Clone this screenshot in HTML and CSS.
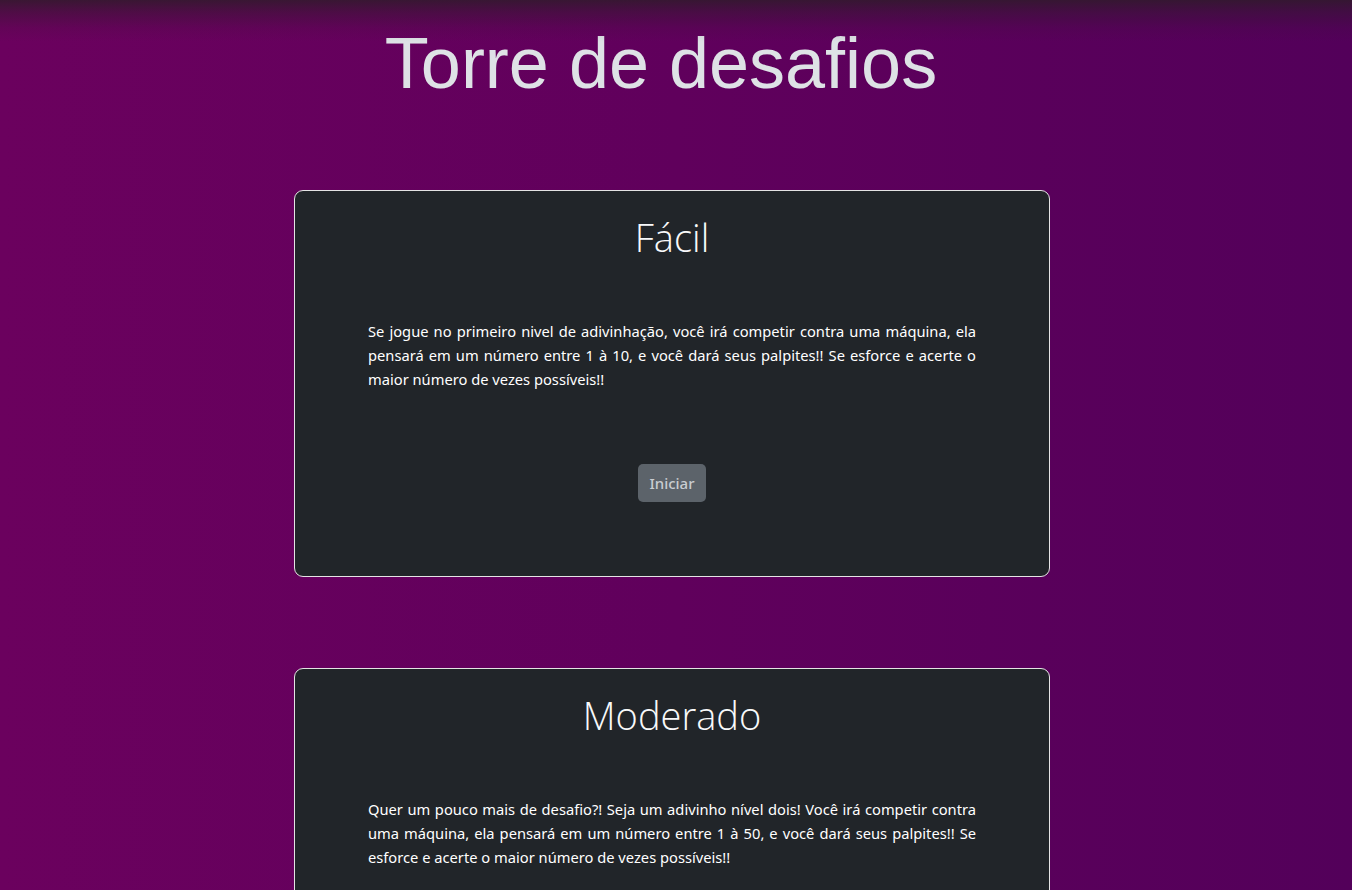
FILE: index.html
```html
<!DOCTYPE html>
<html lang="pt-BR">
<head>
<meta charset="utf-8">
<title>Torre de desafios</title>
<link rel="stylesheet" href="styles.css">
</head>
<body>
<div class="page">
  <h1 class="main-title">Torre de desafios</h1>
  <div class="levels">
    <section class="level-card">
      <h2 class="level-title">Fácil</h2>
      <p class="level-text">Se jogue no primeiro nivel de adivinhação, você irá competir contra uma máquina, ela pensará em um número entre 1 à 10, e você dará seus palpites!! Se esforce e acerte o maior número de vezes possíveis!!</p>
      <button class="btn-start" type="button">Iniciar</button>
    </section>
    <section class="level-card">
      <h2 class="level-title">Moderado</h2>
      <p class="level-text">Quer um pouco mais de desafio?! Seja um adivinho nível dois! Você irá competir contra uma máquina, ela pensará em um número entre 1 à 50, e você dará seus palpites!! Se esforce e acerte o maior número de vezes possíveis!!</p>
      <button class="btn-start" type="button">Iniciar</button>
    </section>
  </div>
</div>
</body>
</html>
```
FILE: styles.css
```css
html, body {
  margin: 0;
  padding: 0;
}
body {
  background: linear-gradient(to right, #6b015e 0%, #60005c 50%, #53005a 100%);
  min-height: 100vh;
  font-family: "Noto Sans", "Open Sans", sans-serif;
  color: #f8f9fa;
  position: relative;
}
body::before {
  content: "";
  position: absolute;
  left: 0;
  right: 0;
  top: 0;
  height: 42px;
  background: linear-gradient(to bottom, rgba(45, 28, 40, 0.8) 0px, rgba(45, 28, 40, 0.45) 12px, rgba(45, 28, 40, 0.12) 28px, rgba(45, 28, 40, 0) 42px);
  pointer-events: none;
}
.page {
  display: flex;
  flex-direction: column;
  align-items: center;
  padding-right: 8px;
}
.main-title {
  margin: 18px 22px 0 0;
  font-family: "Liberation Sans", Arial, sans-serif;
  font-weight: 400;
  font-size: 72px;
  line-height: 90px;
  color: #dee2e6;
}
.levels {
  display: flex;
  flex-direction: column;
  gap: 91px;
  margin-top: 82px;
  padding-bottom: 60px;
}
.level-card {
  width: 754px;
  border: 1px solid #e4e4e4;
  border-radius: 9px;
  background: #212529;
  display: flex;
  flex-direction: column;
  align-items: center;
  padding: 22px 0 74px;
}
.level-title {
  margin: 0;
  font-family: "Open Sans", "Noto Sans", sans-serif;
  font-weight: 300;
  font-size: 38px;
  line-height: 48px;
  color: #f8f9fa;
}
.level-text {
  width: 608px;
  margin: 58px 0 0;
  font-size: 14.7px;
  line-height: 24px;
  text-align: justify;
  color: #ffffff;
}
.btn-start {
  margin-top: 73px;
  height: 38px;
  padding: 0 11px;
  border: none;
  border-radius: 5px;
  background: #5c636a;
  color: #c9cdd1;
  font-family: "Noto Sans", "Open Sans", sans-serif;
  font-size: 15px;
  font-weight: 500;
  cursor: pointer;
}
```
